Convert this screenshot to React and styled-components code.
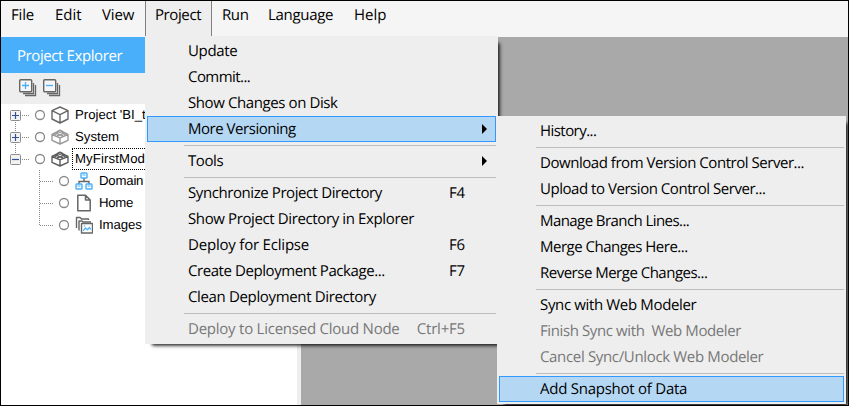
import React from 'react';
import styled, { createGlobalStyle } from 'styled-components';

const Global = createGlobalStyle`
  * { box-sizing: border-box; }
  body { margin: 0; overflow: hidden; }
`;

const Window = styled.div`
  position: relative;
  display: flex;
  flex-direction: column;
  width: 849px;
  height: 406px;
  overflow: hidden;
  border: 1px solid #000;
  background: #fff;
  color: #000;
  font-family: 'Open Sans', 'Noto Sans', sans-serif;
  font-size: 15px;
  text-rendering: geometricPrecision;
`;

const MenuBar = styled.nav`
  display: flex;
  flex: none;
  height: 36px;
  background: #f5f5f5;
`;

const MenuBarItem = styled.div`
  width: ${(p) => p.$width}px;
  height: 35px;
  padding-left: ${(p) => p.$pad}px;
  line-height: 29px;
  white-space: nowrap;
  letter-spacing: ${(p) => p.$spacing || 0}px;
  ${(p) => p.$open && `
    background: #eee;
    border-left: 1px solid #808080;
    border-right: 1px solid #808080;
  `}
`;

const Body = styled.div`
  display: flex;
  flex: 1;
  min-height: 0;
`;

const Explorer = styled.aside`
  display: flex;
  flex-direction: column;
  width: 296px;
`;

const PanelTitle = styled.header`
  height: 36px;
  padding-left: 16px;
  line-height: 38px;
  letter-spacing: -0.41px;
  color: #fff;
  background: #49affa;
`;

const Toolbar = styled.div`
  display: flex;
  gap: 4px;
  height: 31px;
  padding: 5px 0 0 17px;
  background: #eee;
`;

const Tree = styled.div`
  flex: 1;
  font-family: 'Liberation Sans', Arial, sans-serif;
  font-size: 13.2px;
  background: #fff;
`;

const TreeRow = styled.div`
  display: flex;
  align-items: center;
  height: 22px;
  white-space: nowrap;
`;

const TreeText = styled.span`
  margin-left: 3px;
  padding: 0 3px 0 2px;
  line-height: 20px;
  border: 1px ${(p) => (p.$focused ? 'dotted #000' : 'solid transparent')};
  letter-spacing: ${(p) => p.$spacing || 0}px;
`;

const Splitter = styled.div`
  width: 4px;
  background: #eee;
`;

const Canvas = styled.main`
  flex: 1;
  background: #a9a9a9;
`;

const Menu = styled.div`
  position: absolute;
  left: ${(p) => p.$left}px;
  top: ${(p) => p.$top}px;
  width: ${(p) => p.$width}px;
  padding: 2px;
  background: #eee;
  box-shadow: 4px 4px 3px -3px rgba(0, 0, 0, 0.8), 5px 5px 4px -3px rgba(0, 0, 0, 0.4);
`;

const MenuRow = styled.div`
  display: flex;
  height: 26px;
  padding-left: 40px;
  border: 1px solid ${(p) => (p.$active ? '#3399ff' : 'transparent')};
  background: ${(p) => (p.$active ? '#b4d7f3' : 'transparent')};
  color: ${(p) => (p.$disabled ? '#777' : '#000')};
  line-height: 25px;
  white-space: pre;
`;

const Label = styled.span`
  flex: 1;
  letter-spacing: ${(p) => p.$spacing || 0}px;
`;

const Shortcut = styled.span`
  padding-right: 30px;
  letter-spacing: -0.2px;
`;

const Arrow = styled.span`
  align-self: center;
  width: 0;
  height: 0;
  margin-right: 8px;
  border: 5px solid transparent;
  border-left-color: #000;
  border-right: 0;
`;

const Separator = styled.div`
  height: 6px;
  padding: 3px 0 0 37px;

  &::after {
    content: '';
    display: block;
    height: 1px;
    background: #bdbdbd;
  }
`;

const Svg = styled.svg`
  display: block;
  flex: none;
`;

function StackIcon({ plus }) {
  return (
    <Svg width="20" height="20" fill="none">
      <path d="M7 17.5H17.5V7M5 15.5H15.5V5" stroke="#666" strokeWidth="1.3" />
      <rect x="1.7" y="1.7" width="12" height="12" rx="1" fill="#f6f6f6" stroke="#666" strokeWidth="1.4" />
      <path d={plus ? 'M4 7.5H11M7.5 4V11' : 'M4 7.5H11'} stroke="#49affa" strokeWidth="1.3" />
    </Svg>
  );
}

/* Expander, dotted connectors and status circle in front of a top-level node. */
function RootLead({ open, first, last }) {
  return (
    <Svg width="50" height="22" fill="none">
      {!first && <path d="M14.5 0V6" stroke="#888" strokeDasharray="1 1" />}
      {!last && <path d="M14.5 16V22" stroke="#888" strokeDasharray="1 1" />}
      <path d="M21 11.5H29" stroke="#888" strokeDasharray="1 1" />
      <rect x="9.5" y="6.5" width="10" height="10" rx="1" fill="#f3f3f3" stroke="#8c8c8c" />
      <path d={open ? 'M11 11.5H18' : 'M11 11.5H18M14.5 8V15'} stroke="#34509a" strokeWidth="1.2" />
      <circle cx="39" cy="11" r="4.5" stroke="#8a8a8a" strokeWidth="1.3" />
    </Svg>
  );
}

function ChildLead({ last }) {
  return (
    <Svg width="74" height="22" fill="none">
      <path d={last ? 'M38.5 0V11' : 'M38.5 0V22'} stroke="#888" strokeDasharray="1 1" />
      <path d="M39 11.5H53" stroke="#888" strokeDasharray="1 1" />
      <circle cx="63" cy="11" r="4.5" stroke="#8a8a8a" strokeWidth="1.3" />
    </Svg>
  );
}

function CubeIcon() {
  return (
    <Svg width="18" height="18" fill="none" stroke="#666" strokeWidth="1.4" strokeLinejoin="round">
      <path d="M9 1L17 4.7V13L9 17L1 13V4.7ZM1 4.7L9 8.6L17 4.7M9 8.6V17" />
    </Svg>
  );
}

function ModuleIcon({ color }) {
  return (
    <Svg width="18" height="18" fill="none" stroke={color} strokeWidth="1.4" strokeLinejoin="round">
      <path d="M6 4L1 6.5V12.3L9 16L17 12.3V6.5L12 4M1 6.5L9 9.8L17 6.5M9 9.8V16" />
      <path d="M6.4 3.3V5.6L9 6.8L11.6 5.6V3.3L9 2.2ZM6.4 3.3L9 4.4L11.6 3.3M3.5 6.5L6 5.5M14.5 6.5L12 5.5M6 8L9 6.8L12 8" />
    </Svg>
  );
}

function DomainIcon() {
  return (
    <Svg width="18" height="18" fill="none">
      <path d="M9 6V9M4 12.5V9.5H14V12.5" stroke="#666" strokeWidth="1.4" />
      <g fill="#fff" stroke="#49affa" strokeWidth="1.4">
        <rect x="6" y="1" width="6" height="5" rx=".8" />
        <rect x="1" y="12" width="6" height="5" rx=".8" />
        <rect x="11" y="12" width="6" height="5" rx=".8" />
      </g>
      <path d="M7.5 3H10.5M2.5 14H5.5M12.5 14H15.5" stroke="#49affa" />
    </Svg>
  );
}

function PageIcon() {
  return (
    <Svg width="18" height="18" fill="none" stroke="#666" strokeWidth="1.5" strokeLinejoin="round">
      <path d="M2.8 1.2H10.5L15.2 6V16.8H2.8ZM10.5 1.2V6H15.2" />
    </Svg>
  );
}

function ImagesIcon() {
  return (
    <Svg width="18" height="18" fill="none" strokeLinejoin="round">
      <path d="M1.5 12V1.5H5L6.5 3H13.5V4M4 14.5V5H7L8 6H16" stroke="#666" strokeWidth="1.4" />
      <rect x="6.5" y="7.5" width="11" height="9.5" fill="#fff" stroke="#666" strokeWidth="1.4" />
      <path d="M8 14.8L10.5 12L12.5 13.8L14.5 11.5L16 13.5" stroke="#49affa" strokeWidth="1.2" />
      <circle cx="9.5" cy="10" r=".7" fill="#49affa" />
    </Svg>
  );
}

const menuBar = [
  { text: 'File', width: 44, pad: 10, spacing: -0.15 },
  { text: 'Edit', width: 47, pad: 10, spacing: 0 },
  { text: 'View', width: 53, pad: 10, spacing: -0.15 },
  { text: 'Project', width: 67, pad: 9, spacing: -0.4, open: true },
  { text: 'Run', width: 46, pad: 10, spacing: -0.4 },
  { text: 'Language', width: 86, pad: 10, spacing: -0.3 },
  { text: 'Help', width: 50, pad: 10, spacing: 0 },
];

const projectMenu = [
  { text: 'Update', spacing: -0.33 },
  { text: 'Commit...', spacing: -0.55 },
  { text: 'Show Changes on Disk', spacing: -0.4 },
  { text: 'More Versioning', arrow: true, active: true, spacing: -0.47 },
  null,
  { text: 'Tools', arrow: true, spacing: -0.4 },
  null,
  { text: 'Synchronize Project Directory', keys: 'F4', spacing: -0.42 },
  { text: 'Show Project Directory in Explorer', spacing: -0.38 },
  { text: 'Deploy for Eclipse', keys: 'F6', spacing: -0.2 },
  { text: 'Create Deployment Package...', keys: 'F7', spacing: -0.43 },
  { text: 'Clean Deployment Directory', spacing: -0.35 },
  null,
  { text: 'Deploy to Licensed Cloud Node', keys: 'Ctrl+F5', disabled: true, spacing: -0.24 },
];

const versioningMenu = [
  { text: 'History...', spacing: -0.55 },
  null,
  { text: 'Download from Version Control Server...', spacing: -0.46 },
  { text: 'Upload to Version Control Server...', spacing: -0.46 },
  null,
  { text: 'Manage Branch Lines...', spacing: -0.57 },
  { text: 'Merge Changes Here...', spacing: -0.5 },
  { text: 'Reverse Merge Changes...', spacing: -0.5 },
  null,
  { text: 'Sync with Web Modeler', spacing: -0.35 },
  { text: 'Finish Sync with  Web Modeler', disabled: true, spacing: -0.39 },
  { text: 'Cancel Sync/Unlock Web Modeler', disabled: true, spacing: -0.34 },
  null,
  { text: 'Add Snapshot of Data', active: true, spacing: -0.25 },
];

function PopupMenu({ items, left, top, width }) {
  return (
    <Menu $left={left} $top={top} $width={width}>
      {items.map((item, i) =>
        item ? (
          <MenuRow key={i} $active={item.active} $disabled={item.disabled}>
            <Label $spacing={item.spacing}>{item.text}</Label>
            {item.keys && <Shortcut>{item.keys}</Shortcut>}
            {item.arrow && <Arrow />}
          </MenuRow>
        ) : (
          <Separator key={i} />
        )
      )}
    </Menu>
  );
}

export default function App() {
  return (
    <>
      <Global />
      <Window>
        <MenuBar>
          {menuBar.map((m) => (
            <MenuBarItem key={m.text} $width={m.width} $pad={m.pad} $open={m.open} $spacing={m.spacing}>
              {m.text}
            </MenuBarItem>
          ))}
        </MenuBar>
        <Body>
          <Explorer>
            <PanelTitle>Project Explorer</PanelTitle>
            <Toolbar>
              <StackIcon plus />
              <StackIcon />
            </Toolbar>
            <Tree>
              <TreeRow><RootLead first /><CubeIcon /><TreeText>Project 'BI_t</TreeText></TreeRow>
              <TreeRow><RootLead /><ModuleIcon color="#999" /><TreeText>System</TreeText></TreeRow>
              <TreeRow><RootLead open last /><ModuleIcon color="#5c5c5c" /><TreeText $focused $spacing={0.12}>MyFirstModule</TreeText></TreeRow>
              <TreeRow><ChildLead /><DomainIcon /><TreeText $spacing={-0.2}>Domain</TreeText></TreeRow>
              <TreeRow><ChildLead /><PageIcon /><TreeText $spacing={-0.3}>Home</TreeText></TreeRow>
              <TreeRow><ChildLead last /><ImagesIcon /><TreeText $spacing={-0.1}>Images</TreeText></TreeRow>
            </Tree>
          </Explorer>
          <Splitter />
          <Canvas />
        </Body>
        <PopupMenu items={projectMenu} left={144} top={35} width={353} />
        <PopupMenu items={versioningMenu} left={496} top={115} width={349} />
      </Window>
    </>
  );
}
